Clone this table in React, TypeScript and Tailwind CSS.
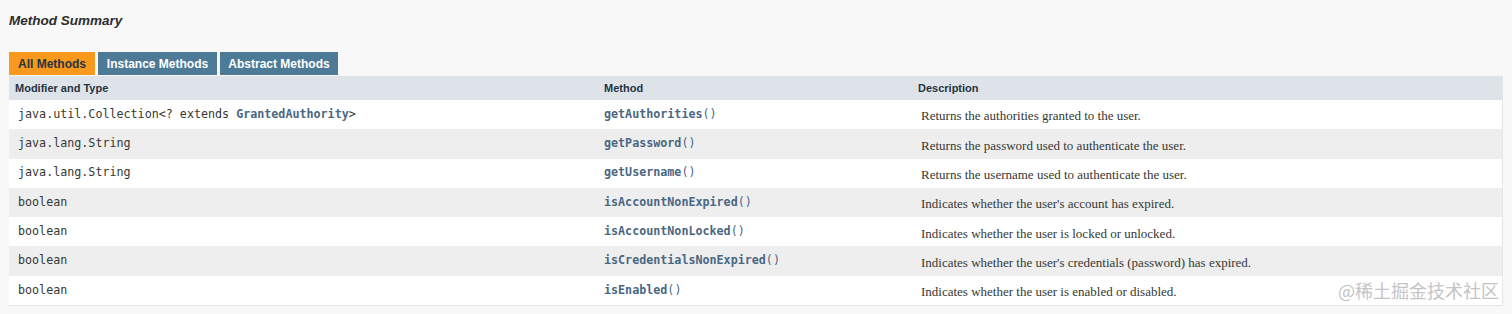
import React from "react";

const rows = [
  { type: ["java.util.Collection<? extends ", "GrantedAuthority", ">"], name: "getAuthorities", desc: "Returns the authorities granted to the user." },
  { type: ["java.lang.String"], name: "getPassword", desc: "Returns the password used to authenticate the user." },
  { type: ["java.lang.String"], name: "getUsername", desc: "Returns the username used to authenticate the user." },
  { type: ["boolean"], name: "isAccountNonExpired", desc: "Indicates whether the user's account has expired." },
  { type: ["boolean"], name: "isAccountNonLocked", desc: "Indicates whether the user is locked or unlocked." },
  { type: ["boolean"], name: "isCredentialsNonExpired", desc: "Indicates whether the user's credentials (password) has expired." },
  { type: ["boolean"], name: "isEnabled", desc: "Indicates whether the user is enabled or disabled." },
];

const sans = "font-['Liberation_Sans',Arial,sans-serif]";
const mono = "font-['DejaVu_Sans_Mono',monospace]";
const serif = "font-['Liberation_Serif',Georgia,serif]";

export default function App() {
  return (
    <div className="relative w-[1512px] h-[314px] bg-[#f8f8f8] overflow-hidden">
      <div className={`${sans} pl-[9px] pt-[11px] h-[52px] text-[13.5px] font-bold italic text-[#2c2c2c]`}>
        Method Summary
      </div>
      <div className={`${sans} flex pl-[9px] h-[24px] text-[12px] font-bold`}>
        <div className="w-[86px] h-[23px] bg-[#f8981d] text-[#253441] flex items-center justify-center">All Methods</div>
        <div className="ml-[3px] w-[119px] h-[23px] bg-[#4d7a97] text-white flex items-center justify-center">Instance Methods</div>
        <div className="ml-[3px] w-[118px] h-[23px] bg-[#4d7a97] text-white flex items-center justify-center">Abstract Methods</div>
      </div>
      <div className="ml-[9px] w-[1494px] border-r border-b border-[#e6e6e6]">
        <div className={`${sans} grid grid-cols-[589px_314px_1fr] h-[24px] bg-[#dee3e9] text-[11px] font-bold text-[#253441] items-center`}>
          <div className="pl-[6px]">Modifier and Type</div>
          <div className="pl-[6px]">Method</div>
          <div className="pl-[6px]">Description</div>
        </div>
        {rows.map((r, i) => (
          <div
            key={r.name}
            className={`grid grid-cols-[589px_314px_1fr] h-[29.3px] items-center ${i % 2 === 0 ? "bg-white" : "bg-[#eeeeef]"}`}
          >
            <div className={`${mono} pl-[9px] text-[11.7px] text-[#353833]`}>
              {r.type[0]}
              {r.type[1] && <span className="font-bold text-[#4a6782]">{r.type[1]}</span>}
              {r.type[2]}
            </div>
            <div className={`${mono} pl-[6px] text-[11.7px] text-[#4a6782]`}>
              <span className="font-bold">{r.name}</span>()
            </div>
            <div className={`${serif} pl-[9px] pt-[3px] text-[13px] text-[#353833]`}>{r.desc}</div>
          </div>
        ))}
      </div>
      <div className="absolute right-[13px] top-[281px] text-[18px] text-[#c4c4c4] font-['Noto_Sans_CJK_SC',sans-serif] leading-none">
        @稀土掘金技术社区
      </div>
    </div>
  );
}
